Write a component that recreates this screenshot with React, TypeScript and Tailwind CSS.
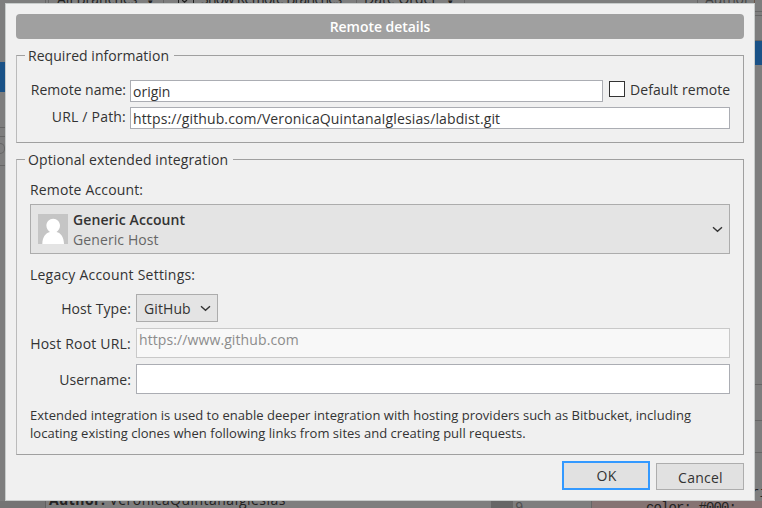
import React from "react";

const Chevron = ({ className }: { className?: string }) => (
  <svg viewBox="0 0 11 7" width="11" height="7" fill="none" className={className}>
    <path d="M1 1.2 5.5 5.2 10 1.2" stroke="#333" strokeWidth="1.4" />
  </svg>
);

const Avatar = () => (
  <svg viewBox="0 0 30 30" width="30" height="30" className="shrink-0">
    <rect width="30" height="30" fill="#c5c5c5" />
    <path d="M15.200 4.800C19 4.800 22 7.800 22 11.600C22 14.500 20.500 16.800 18.500 18C23 19 25.800 23 26 30H4.300C4.500 23 7.500 19 12 18C9.900 16.800 8.400 14.500 8.400 11.600C8.400 7.800 11.400 4.800 15.200 4.800Z" fill="#fff" />
  </svg>
);

function Backdrop() {
  return (
    <div className="flex h-[508px] w-[762px] flex-col justify-between bg-[#7e7e7e] text-[#222]">
      <div className="flex h-[501px] justify-between">
        <div className="flex w-[5px] flex-col">
          <div className="h-[62px]" />
          <div className="h-[30px] bg-[#1a5287]" />
          <div className="mt-[35px] h-[10px] border-y border-[#666]" />
          <div className="mt-[6px] h-[11px] w-[5px] rounded-r-md border-y border-r border-[#666]" />
          <div className="mt-[11px] h-px bg-[#666]" />
        </div>
        <div className="flex h-[3px] w-[750px] overflow-hidden text-[14px] leading-[20px]">
          <div className="ml-[40px] h-[3px] w-px shrink-0 bg-[#666]" />
          <div className="ml-[2px] flex w-[116px] shrink-0 border-x border-[#666] pl-[8px]">
            <span className="-mt-[11px] w-[91px] shrink-0 whitespace-nowrap">All Branches</span>
            <span className="-mt-[8px] text-[9px]">▾</span>
          </div>
          <div className="ml-[14px] h-[3px] w-[16px] shrink-0 border-x border-[#222] pl-[3px]">
            <svg viewBox="0 0 7 3" width="7" height="3" fill="none">
              <path d="M0 0 2.500 2.200 5 0" stroke="#222" strokeWidth="1.300" />
            </svg>
          </div>
          <span className="-mt-[11px] ml-[7px] w-[155px] shrink-0 whitespace-nowrap tracking-[-0.7px]">Show Remote Branches</span>
          <div className="flex w-[109px] shrink-0 border-x border-[#666] pl-[7px]">
            <span className="-mt-[11px] w-[84px] shrink-0 whitespace-nowrap">Date Order</span>
            <span className="-mt-[8px] text-[9px]">▾</span>
          </div>
          <div className="ml-[232px] w-[58px] shrink-0 border-l border-[#666] pl-[7px] text-[#444]">
            <div className="-mt-[11px] whitespace-nowrap tracking-[-0.1px]">Author Name</div>
          </div>
        </div>
        <div className="flex w-[7px] flex-col overflow-hidden">
          <div className="mt-[11px] h-[5px] border-y border-[#666]" />
          <div className="mt-[24px] h-px bg-[#666]" />
          <div className="h-[24px] bg-[#1a5287]" />
          <div className="mt-[319px] h-px bg-[#666]" />
          <div className="mt-[35px] h-px bg-[#666]" />
          <div className="mt-[31px] h-px bg-[#666]" />
          <div className="mt-[30px] h-[18px] font-['Liberation_Mono',monospace] text-[14px] leading-[20px]">
            <span className="-ml-[4px]">ri</span>
          </div>
        </div>
      </div>
      <div className="flex h-[7px] overflow-hidden">
        <div className="w-[46px] border-r border-[#606060] bg-[#747474]" />
        <div className="w-[445px] pl-[3px] text-[14px] leading-[20px] tracking-[0.46px]">
          <div className="-mt-[11px] whitespace-nowrap"><b>Author:</b> VeronicaQuintanaIglesias</div>
        </div>
        <div className="w-[22px] bg-[#666]" />
        <div className="w-[79px] border-r border-[#666] pl-[2px] font-['Liberation_Mono',monospace] text-[14px] leading-[20px] text-[#505050]">
          <div className="-mt-[3px]">9</div>
        </div>
        <div className="grow bg-[#857373] pl-[54px] font-['Liberation_Mono',monospace] text-[14px] leading-[20px] tracking-[-0.9px]">
          <div className="-mt-[3px]">color: #000;</div>
        </div>
      </div>
    </div>
  );
}

export default function App() {
  return (
    <div className="relative h-[508px] w-[762px] overflow-hidden font-['Open_Sans','Noto_Sans',sans-serif]">
      <Backdrop />
      <div className="absolute left-[5px] top-[3px] flex h-[498px] w-[750px] flex-col border border-[#c8cccb] bg-[#f0f0f0] px-[10px] pt-[10px] text-[14px] leading-[20px] text-[#333] whitespace-nowrap">
        <div className="flex h-[25px] shrink-0 justify-center rounded-[4px] bg-[#a0a0a0] pt-[3px] font-semibold text-white">
          <span className="tracking-[-0.04px]">Remote details</span>
        </div>

        <section className="mt-[16px] flex h-[88px] shrink-0 flex-col border border-[#a0a0a0] border-l-[#bbb] pl-[13px] pr-[13px]">
          <div className="-mt-[10px] -ml-[5px] flex h-[20px]">
            <h2 className="w-[149px] bg-[#f0f0f0] pl-[3px] tracking-[0.04px]">Required information</h2>
          </div>
          <div className="mt-[14px] flex h-[22px]">
            <label className="w-[96px] shrink-0 text-right tracking-normal">Remote name:</label>
            <div className="ml-[4px] h-[22px] w-[473px] shrink-0 border border-[#abadb3] bg-white pl-[2px] pt-px">
              <span className="tracking-normal">origin</span>
            </div>
            <div className="ml-[6px] mt-px h-[16px] w-[16px] shrink-0 border border-[#333] bg-white" />
            <span className="ml-[5px] tracking-[0.08px]">Default remote</span>
          </div>
          <div className="mt-[5px] flex h-[22px]">
            <label className="w-[96px] shrink-0 text-right tracking-[0.2px]">URL / Path:</label>
            <div className="ml-[4px] h-[22px] w-[600px] shrink-0 border border-[#abadb3] bg-white pl-[2px] pt-px">
              <span className="tracking-[0.125px]">https://github.com/VeronicaQuintanaIglesias/labdist.git</span>
            </div>
          </div>
        </section>

        <section className="mt-[16px] flex h-[296px] shrink-0 flex-col border border-[#a0a0a0] border-l-[#bbb] pl-[13px] pr-[13px]">
          <div className="-mt-[10px] -ml-[5px] flex h-[20px]">
            <h2 className="w-[208px] bg-[#f0f0f0] pl-[3px] tracking-[0.12px]">Optional extended integration</h2>
          </div>
          <div className="mt-[10px] h-[20px] tracking-[0.15px]">Remote Account:</div>
          <div className="mt-[4px] flex h-[50px] w-[700px] shrink-0 items-center border border-[#acacac] bg-[#e4e4e4] pl-[7px] pr-[6px]">
            <Avatar />
            <div className="ml-[5px] grow pt-[2px]">
              <div className="h-[20px] font-semibold tracking-[0.1px]">Generic Account</div>
              <div className="h-[20px] tracking-[0.1px] text-[#666]">Generic Host</div>
            </div>
            <Chevron />
          </div>
          <div className="mt-[11px] h-[20px] tracking-[0.22px]">Legacy Account Settings:</div>
          <div className="mt-[9px] flex h-[28px] shrink-0">
            <label className="w-[101px] pt-[5px] text-right tracking-[0.1px]">Host Type:</label>
            <div className="ml-[5px] flex h-[28px] w-[82px] items-center border border-[#acacac] bg-[#e4e4e4] pl-[7px]">
              <span className="w-[56px] pt-px tracking-[0.1px]">GitHub</span>
              <Chevron />
            </div>
          </div>
          <div className="mt-[6px] flex h-[30px] shrink-0">
            <label className="w-[101px] pt-[6px] text-right tracking-[0.2px]">Host Root URL:</label>
            <div className="ml-[5px] h-[30px] w-[594px] shrink-0 border border-[#c9c9c9] bg-[#f8f8f8] pl-[2px] pt-px text-[#8c8c8c]">
              <span className="tracking-[0.1px]">https://www.github.com</span>
            </div>
          </div>
          <div className="mt-[6px] flex h-[30px] shrink-0">
            <label className="w-[101px] pt-[6px] text-right tracking-[0.05px]">Username:</label>
            <div className="ml-[5px] h-[30px] w-[594px] shrink-0 border border-[#abadb3] bg-white" />
          </div>
          <div className="mt-[12px] text-[13px] leading-[18px]">
            <div className="tracking-[0.02px]">Extended integration is used to enable deeper integration with hosting providers such as Bitbucket, including</div>
            <div className="tracking-[0.02px]">locating existing clones when following links from sites and creating pull requests.</div>
          </div>
        </section>

        <div className="mt-[6px] flex justify-end gap-[6px]">
          <button className="h-[29px] w-[88px] border-2 border-[#3399ff] bg-[#e1e1e1] pl-px font-medium leading-[20px] tracking-[0.3px]">OK</button>
          <button className="mt-[2px] h-[27px] w-[88px] border border-[#adadad] bg-[#e1e1e1] pl-px pt-[2px] font-medium leading-[20px] tracking-[0.25px]">Cancel</button>
        </div>
      </div>
    </div>
  );
}
